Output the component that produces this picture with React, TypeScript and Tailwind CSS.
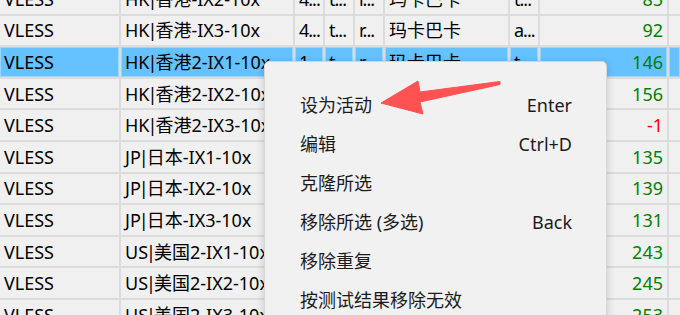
import React from "react";

interface Row {
  proto: string;
  name: string;
  a: string;
  b: string;
  c: string;
  group: string;
  d: string;
  delay: number;
}

const ROWS: Row[] = [
  { proto: "VLESS", name: "HK|香港-IX2-10x", a: "4...", b: "t...", c: "r...", group: "玛卡巴卡", d: "t...", delay: 85 },
  { proto: "VLESS", name: "HK|香港-IX3-10x", a: "4...", b: "t...", c: "r...", group: "玛卡巴卡", d: "a...", delay: 92 },
  { proto: "VLESS", name: "HK|香港2-IX1-10x", a: "1...", b: "t...", c: "r...", group: "玛卡巴卡", d: "t...", delay: 146 },
  { proto: "VLESS", name: "HK|香港2-IX2-10x", a: "1...", b: "t...", c: "r...", group: "玛卡巴卡", d: "t...", delay: 156 },
  { proto: "VLESS", name: "HK|香港2-IX3-10x", a: "1...", b: "t...", c: "r...", group: "玛卡巴卡", d: "t...", delay: -1 },
  { proto: "VLESS", name: "JP|日本-IX1-10x", a: "4...", b: "t...", c: "r...", group: "玛卡巴卡", d: "t...", delay: 135 },
  { proto: "VLESS", name: "JP|日本-IX2-10x", a: "4...", b: "t...", c: "r...", group: "玛卡巴卡", d: "t...", delay: 139 },
  { proto: "VLESS", name: "JP|日本-IX3-10x", a: "4...", b: "t...", c: "r...", group: "玛卡巴卡", d: "t...", delay: 131 },
  { proto: "VLESS", name: "US|美国2-IX1-10x", a: "1...", b: "t...", c: "r...", group: "玛卡巴卡", d: "t...", delay: 243 },
  { proto: "VLESS", name: "US|美国2-IX2-10x", a: "1...", b: "t...", c: "r...", group: "玛卡巴卡", d: "t...", delay: 245 },
  { proto: "VLESS", name: "US|美国2-IX3-10x", a: "1...", b: "t...", c: "r...", group: "玛卡巴卡", d: "t...", delay: 253 },
];

const SELECTED = 2;

const MENU = [
  { label: "设为活动", key: "Enter" },
  { label: "编辑", key: "Ctrl+D" },
  { label: "克隆所选", key: "" },
  { label: "移除所选 (多选)", key: "Back" },
  { label: "移除重复", key: "" },
  { label: "按测试结果移除无效", key: "" },
];

function Cell({ children, selected, className = "" }: { children?: React.ReactNode; selected: boolean; className?: string }) {
  return (
    <div className="border-r-2 border-[#dcdcdc] h-full overflow-hidden">
      <div
        className={
          "h-full flex items-center px-[3px] whitespace-nowrap overflow-hidden " +
          (selected ? "bg-[#66c2ff] border border-[#9ad6ff] " : "border border-transparent ") +
          className
        }
      >
        {children}
      </div>
    </div>
  );
}

// the pipe sits tight against its neighbours in the original font
function NodeName({ name }: { name: string }) {
  const [region, rest] = name.split("|");
  return (
    <>
      {region}
      <span className="mx-[-2px]">|</span>
      {rest}
    </>
  );
}

function App() {
  return (
    <div
      className="relative w-[680px] h-[315px] overflow-hidden bg-[#f0f0f0] text-[18px] text-black"
      style={{ fontFamily: '"Noto Sans", "Noto Sans CJK SC", sans-serif' }}
    >
      {/* table */}
      <div className="flex flex-col mt-[-16px]">
        {ROWS.map((r, i) => {
          const sel = i === SELECTED;
          return (
            <div
              key={i}
              className="grid grid-cols-[121px_174px_30px_30px_30px_125px_30px_129px_1fr] h-[31.6px] border-b-2 border-[#dcdcdc] leading-none"
            >
              <Cell selected={sel}>{r.proto}</Cell>
              <Cell selected={sel}>
                <NodeName name={r.name} />
              </Cell>
              <Cell selected={sel} className="tracking-[-1px]">{r.a}</Cell>
              <Cell selected={sel} className="tracking-[-1px]">{r.b}</Cell>
              <Cell selected={sel} className="tracking-[-1px]">{r.c}</Cell>
              <Cell selected={sel}>{r.group}</Cell>
              <Cell selected={sel} className="tracking-[-1px]">{r.d}</Cell>
              <Cell selected={sel} className={"justify-end " + (r.delay < 0 ? "text-[#ff0000]" : "text-[#008000]")}>
                {r.delay}
              </Cell>
              <div className={"h-full " + (sel ? "bg-[#66c2ff] border border-[#9ad6ff]" : "")} />
            </div>
          );
        })}
      </div>

      {/* context menu */}
      <div className="absolute left-[264px] top-[61px] w-[343px] h-[280px] bg-[#f1f1f1] rounded-[5px] border border-[#d6d6d6] shadow-[0_2px_8px_rgba(0,0,0,0.18)] pt-[24px] text-[#1b1b1b]">
        {MENU.map((m) => (
          <div key={m.label} className="flex items-center justify-between gap-4 h-[39px] pl-[35px] pr-[34px]">
            <span className="whitespace-nowrap">{m.label}</span>
            {m.key && <span className="whitespace-nowrap">{m.key}</span>}
          </div>
        ))}
      </div>

      {/* annotation arrow */}
      <svg className="absolute left-0 top-0 pointer-events-none" width="680" height="315" viewBox="0 0 680 315">
        <polygon
          points="381,103 418,81 420,92 500,81.5 500,84.5 420,102 423,114"
          fill="#ff5252"
          stroke="#ff5252"
          strokeWidth="1"
          strokeLinejoin="round"
        />
      </svg>
    </div>
  );
}

export default App;
